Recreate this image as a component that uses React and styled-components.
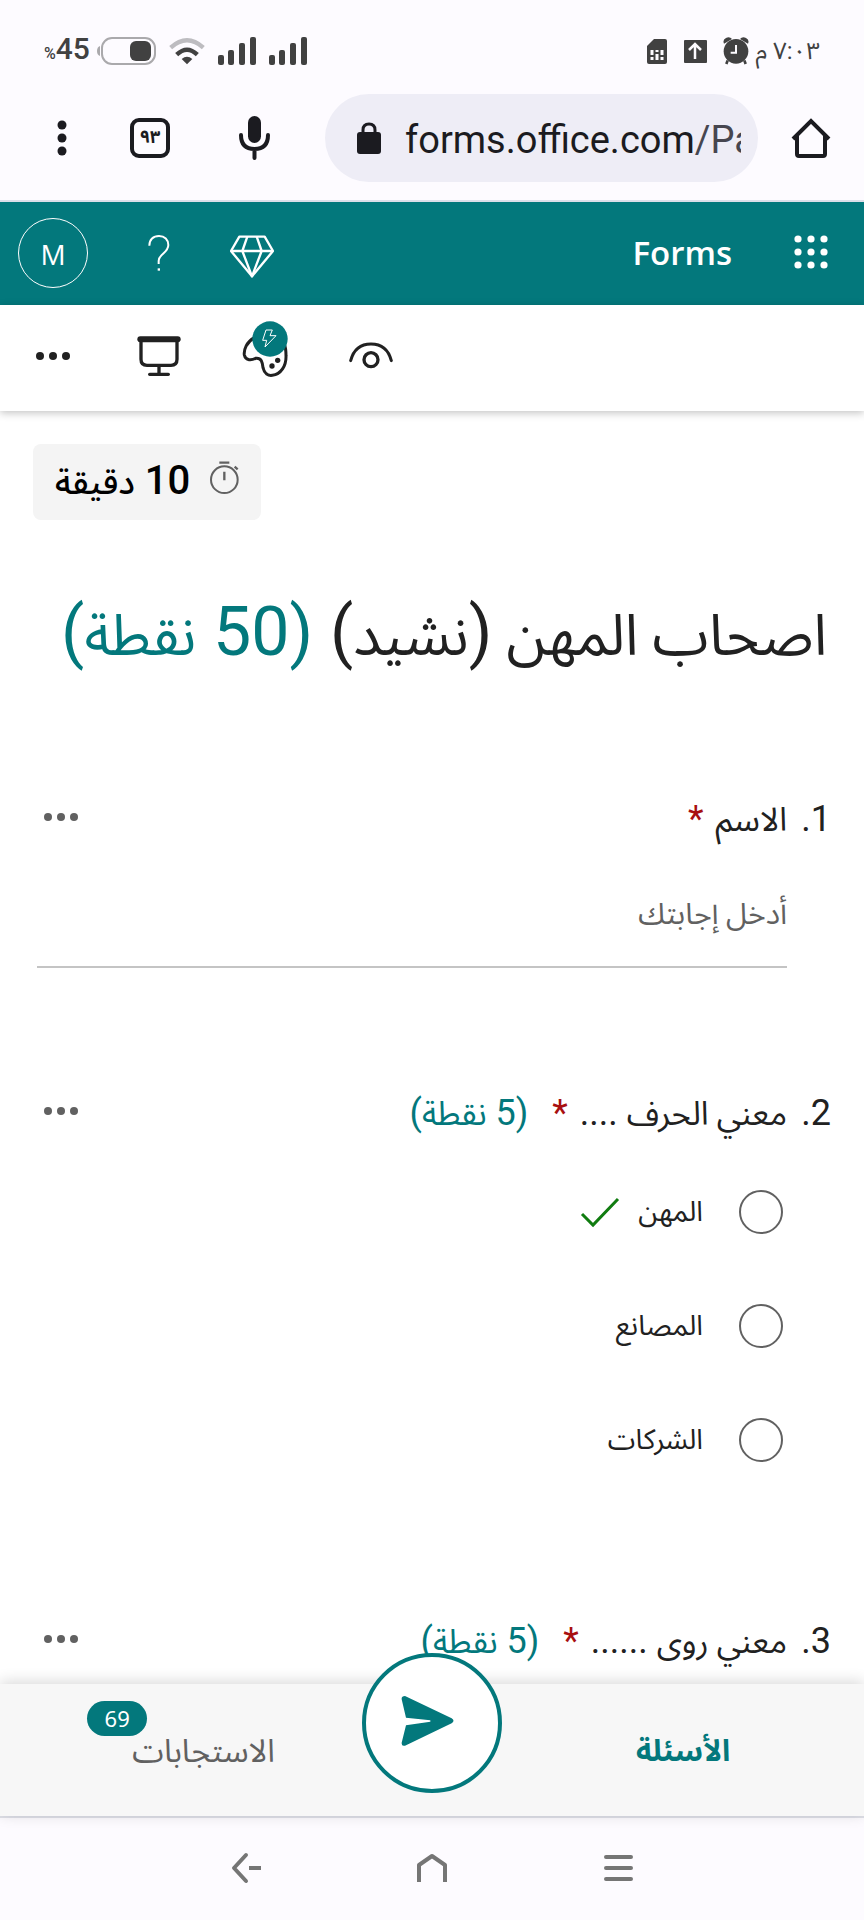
import React, { useState } from 'react';
import styled, { createGlobalStyle, css } from 'styled-components';

const teal = '#03787c';

const GlobalStyle = createGlobalStyle`
  * {
    box-sizing: border-box;
  }

  body {
    margin: 0;
    background: #fff;
    font-family: Roboto, 'Noto Sans Arabic', 'DejaVu Sans', sans-serif;
    color: #212121;
  }

  button,
  input {
    font: inherit;
    color: inherit;
  }
`;

const Screen = styled.div`
  display: flex;
  flex-direction: column;
  height: 100vh;
`;

const StatusBar = styled.div`
  display: flex;
  align-items: center;
  justify-content: space-between;
  height: 94px;
  padding: 8px 44px 0;
  background: #fdfbff;
  color: #414141;
`;

const StatusGroup = styled.div`
  display: flex;
  align-items: center;
  gap: ${props => props.$gap}px;
`;

const Clock = styled.time`
  margin-left: -10px;
  font-size: 24px;
  line-height: 32px;
`;

const Battery = styled.span`
  margin-right: -6px;
  direction: ltr;
  font-size: 30px;
  line-height: 32px;
  font-weight: 500;

  small {
    font-size: 16px;
  }
`;

const BrowserBar = styled.div`
  display: flex;
  align-items: center;
  height: 108px;
  padding: 0 0 18px 8px;
  border-bottom: 2px solid #dcdfe9;
  background: #fdfbff;
  color: #1b1b20;
`;

const IconButton = styled.button`
  display: flex;
  flex: none;
  align-items: center;
  justify-content: center;
  width: ${props => props.$width || 106}px;
  height: 88px;
  padding: 0;
  border: 0;
  background: none;
  cursor: pointer;
`;

const AddressBar = styled.label`
  display: flex;
  flex: 1;
  align-items: center;
  gap: 24px;
  min-width: 0;
  height: 88px;
  padding: 0 17px 0 32px;
  border-radius: 44px;
  background: #eeedf6;
  direction: ltr;
`;

const Url = styled.span`
  flex: 1;
  overflow: hidden;
  padding-top: 4px;
  font-size: 38px;
  line-height: 48px;
  white-space: nowrap;

  span {
    color: #46464f;
  }
`;

const TabsButton = styled(IconButton)`
  span {
    width: 40px;
    height: 40px;
    border: 4px solid #1b1b20;
    border-radius: 9px;
    font-size: 18px;
    font-weight: 700;
    line-height: 30px;
  }
`;

const AppHeader = styled.header`
  display: flex;
  flex: none;
  align-items: center;
  height: 103px;
  padding-bottom: 2px;
  background: ${teal};
  color: #fff;
`;

const Brand = styled.a`
  margin-left: auto;
  margin-right: 26px;
  color: #fff;
  font-family: 'Open Sans', sans-serif;
  font-size: 33px;
  font-weight: 600;
  line-height: 44px;
  text-decoration: none;
`;

const Avatar = styled.span`
  width: 70px;
  height: 70px;
  border: 1px solid #fff;
  border-radius: 50%;
  font-family: 'Open Sans', sans-serif;
  font-size: 28px;
  line-height: 70px;
  text-align: center;
`;

const CommandBar = styled.nav`
  position: relative;
  display: flex;
  flex: none;
  flex-direction: row-reverse;
  justify-content: flex-end;
  height: 106px;
  background: #fff;
  box-shadow: 0 2px 8px rgba(0, 0, 0, 0.24);
  direction: ltr;

  ${IconButton} {
    height: 102px;
  }
`;

const Form = styled.main`
  flex: 1;
  min-height: 0;
  overflow: hidden auto;
  scrollbar-width: none;
  padding: 33px 33px 0;
`;

const Timer = styled.div`
  display: flex;
  align-items: center;
  gap: 20px;
  width: fit-content;
  height: 76px;
  margin-right: auto;
  padding: 0 22px 10px 22px;
  border-radius: 8px;
  background: #f4f4f4;
  color: #000;
  font-size: 40px;
  font-weight: 500;
  line-height: 48px;

  span {
    padding-top: 8px;
  }
`;

const Arabic = styled.span`
  font-size: ${props => props.$size}px;
`;

const Title = styled.h1`
  margin: 68px 4px 113px;
  font-size: 68px;
  font-weight: 400;
  line-height: 88px;
  white-space: nowrap;
`;

const Points = styled.span`
  color: ${teal};
`;

const Question = styled.section`
  height: ${props => props.$height}px;
`;

const QuestionHead = styled.div`
  display: flex;
  align-items: flex-start;
  justify-content: space-between;
  height: 52px;

  ${IconButton} {
    width: 56px;
    height: 48px;
    color: #616161;
  }
`;

const QuestionTitle = styled.h2`
  display: flex;
  align-items: baseline;
  margin: 0;
  font-size: 36px;
  font-weight: 400;
  line-height: 52px;
  white-space: pre;
`;

const Ordinal = styled.span`
  width: 44px;
`;

const Required = styled.span`
  margin: 0 12px 0 ${props => (props.$spaced ? 24 : 0)}px;
  color: #a80f0f;
`;

const Answer = styled.input`
  display: block;
  width: calc(100% - 48px);
  height: 108px;
  margin: 15px 44px 0 4px;
  padding: 0;
  border: 0;
  border-bottom: 2px solid #c4c4c4;
  outline: 0;
  background: none;
  font-size: 30px;

  &::placeholder {
    color: #616161;
    opacity: 1;
  }
`;

const Choices = styled.div`
  display: flex;
  flex-direction: column;
  gap: 70px;
  padding: 51px 48px 0 0;
`;

const Choice = styled.label`
  display: flex;
  align-items: center;
  height: 44px;
  font-size: 28px;
  line-height: 44px;

  svg {
    margin-right: 18px;
  }
`;

const Radio = styled.input`
  width: 44px;
  height: 44px;
  margin: 0 0 0 36px;
  border: 2px solid #616161;
  border-radius: 50%;
  appearance: none;

  &:checked {
    border: 12px solid ${teal};
  }
`;

const Footer = styled.footer`
  position: relative;
  display: grid;
  flex: none;
  grid-template-columns: 1fr 140px 1fr;
  height: 132px;
  background: #f7f7f7;
  box-shadow: 0 -2px 14px rgba(0, 0, 0, 0.16);
`;

const Tab = styled.button`
  display: flex;
  align-items: center;
  justify-content: center;
  padding: 2px 0 0;
  border: 0;
  background: none;
  color: #616161;
  font-size: 32px;
  line-height: 44px;

  ${props => props.$active && css`
    color: ${teal};
    font-size: 30px;
    font-weight: 700;
  `}
`;

const Badge = styled.span`
  align-self: flex-start;
  width: 60px;
  height: 35px;
  margin: 15px -15px 0 0;
  border-radius: 18px;
  background: ${teal};
  color: #fff;
  font-family: 'Noto Sans', sans-serif;
  font-size: 22px;
  line-height: 35px;
`;

const SendButton = styled.button`
  display: flex;
  align-items: center;
  justify-content: center;
  width: 140px;
  height: 140px;
  margin-top: -31px;
  padding: 0 10px 4px 0;
  border: 4px solid ${teal};
  border-radius: 50%;
  background: #fff;
  color: ${teal};
`;

const SystemNav = styled.nav`
  display: flex;
  flex: none;
  justify-content: center;
  height: 104px;
  border-top: 2px solid #dfe0e8;
  background: #fdfbff;
  color: #757575;

  ${IconButton} {
    height: 100px;
  }
`;

const Signal = () => (
  <svg width="38" height="28" viewBox="0 0 38 28" fill="currentColor">
    <rect x="0" y="18" width="6" height="10" rx="2" />
    <rect x="10" y="13" width="6" height="15" rx="2" />
    <rect x="21" y="6" width="6" height="22" rx="2" />
    <rect x="32" y="0" width="6" height="28" rx="2" />
  </svg>
);

const Wifi = () => (
  <svg width="36" height="27" viewBox="0 0 108 81" fill="none" strokeWidth="13">
    <path d="M5 29Q54 -15 103 29" stroke="#bdbcc0" />
    <path d="M23 50Q54 20 85 50" stroke="currentColor" />
    <path d="M38 63Q54 49 70 63L54 79Z" fill="currentColor" />
  </svg>
);

const BatteryIcon = () => (
  <svg width="59" height="28" viewBox="0 0 59 28">
    <path d="M3 9Q0 10 0 14Q0 18 3 19Z" fill="#aaa9ac" />
    <rect x="5" y="1" width="53" height="26" rx="10" fill="none" stroke="#aaa9ac" strokeWidth="2" />
    <rect x="33" y="4" width="21" height="20" rx="6" fill="currentColor" />
  </svg>
);

const Alarm = () => (
  <svg width="26" height="28" viewBox="0 0 78 84" fill="currentColor">
    <path d="M3 20Q-2 8 9 3Q20 -2 27 6ZM75 20Q80 8 69 3Q58 -2 51 6Z" />
    <circle cx="39" cy="43" r="37" />
    <path d="M14 70L10 81M64 70L68 81" stroke="currentColor" strokeWidth="8" />
    <path d="M39 24V47H23" fill="none" stroke="#fdfbff" strokeWidth="6" />
  </svg>
);

const Upload = () => (
  <svg width="24" height="24" viewBox="0 0 24 24">
    <rect x="1" y="1" width="23" height="23" rx="1" fill="currentColor" />
    <path d="M12 20V6M6 11L12 5L18 11" fill="none" stroke="#fdfbff" strokeWidth="2.5" />
  </svg>
);

const Sim = () => (
  <svg width="20" height="25" viewBox="0 0 20 25">
    <path d="M7 0H18Q20 0 20 2V23Q20 25 18 25H2Q0 25 0 23V7Z" fill="currentColor" />
    <path d="M5 11V16M5 18V21M10 11V13M10 15V21M15 11V16M15 18V21" stroke="#fdfbff" strokeWidth="3" />
  </svg>
);

const Home = () => (
  <svg width="40" height="42" viewBox="0 0 40 42" fill="none" stroke="currentColor" strokeWidth="4">
    <path d="M2 22L20 4L38 22" />
    <path d="M6 19V37Q6 39 8 39H32Q34 39 34 37V19" />
  </svg>
);

const Lock = () => (
  <svg width="24" height="32" viewBox="0 0 24 32">
    <path d="M6 12V8Q6 2 12 2Q18 2 18 8V12" fill="none" stroke="currentColor" strokeWidth="3" />
    <rect y="10" width="24" height="22" rx="3" fill="currentColor" />
  </svg>
);

const Mic = () => (
  <svg width="32" height="44" viewBox="0 0 32 44">
    <rect x="9" y="0" width="13" height="27" rx="6.5" fill="currentColor" />
    <path d="M2 19Q2 33 15.500 33Q29 33 29 19M15.500 33V42" fill="none" stroke="currentColor" strokeWidth="4" strokeLinecap="round" />
  </svg>
);

const Kebab = () => (
  <svg width="10" height="36" viewBox="0 0 10 36" fill="currentColor">
    <circle cx="5" cy="5" r="4.500" />
    <circle cx="5" cy="18" r="4.500" />
    <circle cx="5" cy="31" r="4.500" />
  </svg>
);

const Dots = () => (
  <svg width="36" height="10" viewBox="0 0 36 10" fill="currentColor">
    <circle cx="5" cy="5" r="4" />
    <circle cx="18" cy="5" r="4" />
    <circle cx="31" cy="5" r="4" />
  </svg>
);

const Waffle = () => (
  <svg width="34" height="36" viewBox="0 0 34 36" fill="currentColor">
    {[4, 17, 30].map(y => [4, 17, 30].map(x => (
      <circle key={`${x}-${y}`} cx={x} cy={y} r="3.600" />
    )))}
  </svg>
);

const Diamond = () => (
  <svg width="44" height="50" viewBox="0 0 132 150" fill="none" stroke="currentColor" strokeWidth="7" strokeLinejoin="round">
    <path d="M28 26H104L129 69L66 145L3 69Z" />
    <path d="M3 69H129M52 26L37 69L66 145L95 69L80 26" />
  </svg>
);

const Help = () => (
  <svg width="22" height="36" viewBox="0 0 66 108">
    <path d="M4 32C4 14 16 3 33 3C50 3 61 14 61 30C61 54 32 56 32 78V87" fill="none" stroke="currentColor" strokeWidth="6" />
    <rect x="29" y="100" width="7" height="7" fill="currentColor" />
  </svg>
);

const Eye = () => (
  <svg width="44" height="28" viewBox="0 0 132 84" fill="none" stroke="currentColor" strokeWidth="9">
    <path d="M5 56Q18 6 66 6Q114 6 127 56" strokeLinecap="round" />
    <circle cx="66" cy="53" r="21" strokeWidth="10" />
  </svg>
);

const Palette = () => (
  <svg width="48" height="74" viewBox="0 0 144 222">
    <g fill="none" stroke="currentColor" strokeWidth="9">
      <path d="M40 56C16 70 8 92 10 108C14 126 32 124 44 118C62 116 64 130 66 146C70 164 82 171 94 169C120 166 136 140 135 110C135 95 134 85 130 76" />
    </g>
    <circle cx="93" cy="141" r="8" fill="currentColor" />
    <circle cx="110" cy="124" r="8" fill="currentColor" />
    <circle cx="87" cy="60" r="53" fill={teal} />
    <path d="M75 33H94L87 50H105L72 84L77 64H65Z" fill="none" stroke="#fff" strokeWidth="3" />
  </svg>
);

const Present = () => (
  <svg width="44" height="40" viewBox="0 0 132 120" fill="none" stroke="currentColor" strokeLinecap="round">
    <path d="M10 10H122" strokeWidth="18" />
    <path d="M12 14V70Q12 88 30 88H102Q120 88 120 70V14M66 88V114" strokeWidth="10" />
    <path d="M38 115H94" strokeWidth="10" />
  </svg>
);

const Stopwatch = () => (
  <svg width="29" height="33" viewBox="0 0 87 99" fill="none" stroke="#616161" strokeWidth="6">
    <circle cx="43" cy="56" r="40" />
    <path d="M28 5H58M43 32V58M74 17L83 25" strokeWidth="7" />
  </svg>
);

const Check = () => (
  <svg width="40" height="44" viewBox="0 0 40 44" fill="none" stroke="#107c10" strokeWidth="3">
    <path d="M2 24L13 35L38 9" />
  </svg>
);

const Send = () => (
  <svg width="53" height="50" viewBox="0 0 159 150" fill="currentColor">
    <path d="M12 0L152 67Q163 74 152 82L12 149Q1 152 2 140L15 88L88 77V73L15 65L2 10Q1 0 12 0Z" />
  </svg>
);

const Back = () => (
  <svg width="30" height="32" viewBox="0 0 30 32" fill="none" stroke="currentColor" strokeWidth="4" strokeLinecap="round" strokeLinejoin="round">
    <path d="M15 3L3 16L15 29" />
    <path d="M18 16H30" strokeLinecap="butt" />
  </svg>
);

const NavHome = () => (
  <svg width="32" height="32" viewBox="0 0 32 32" fill="none" stroke="currentColor" strokeWidth="4" strokeLinejoin="round">
    <path d="M3 30V13L16 4L29 13V30" />
  </svg>
);

const Recents = () => (
  <svg width="30" height="30" viewBox="0 0 30 30" stroke="currentColor" strokeWidth="4" strokeLinecap="round">
    <path d="M3 4H28M3 15H28M3 26H28" />
  </svg>
);

const choices = [
  { label: 'المهن', correct: true },
  { label: 'المصانع' },
  { label: 'الشركات' },
];

const QuestionHeader = ({ id, number, text, blank, points }) => (
  <QuestionHead>
    <QuestionTitle id={id}>
      <Ordinal>{number}.</Ordinal>
      <Arabic $size={33}>{text}</Arabic>
      {blank && <span> {blank}</span>}
      <Required $spaced={Boolean(points)}>*</Required>
      {points && (
        <Points>
          ({points} <Arabic $size={33}>نقطة</Arabic>)
        </Points>
      )}
    </QuestionTitle>
    <IconButton aria-label="خيارات السؤال"><Dots /></IconButton>
  </QuestionHead>
);

const App = () => {
  const [name, setName] = useState('');
  const [answer, setAnswer] = useState('');

  return (
    <Screen dir="rtl" lang="ar">
      <GlobalStyle />
      <StatusBar>
        <StatusGroup $gap={16}>
          <Clock>٧:٠٣ م</Clock>
          <Alarm />
          <Upload />
          <Sim />
        </StatusGroup>
        <StatusGroup $gap={13}>
          <Signal />
          <Signal />
          <Wifi />
          <BatteryIcon />
          <Battery><small>%</small>45</Battery>
        </StatusGroup>
      </StatusBar>

      <BrowserBar>
        <IconButton aria-label="الصفحة الرئيسية"><Home /></IconButton>
        <AddressBar>
          <Lock />
          <Url>forms.office.com<span>/Pa</span></Url>
        </AddressBar>
        <IconButton $width={140} aria-label="بحث صوتي"><Mic /></IconButton>
        <TabsButton $width={70} aria-label="علامات التبويب"><span>٩٣</span></TabsButton>
        <IconButton $width={107} aria-label="القائمة"><Kebab /></IconButton>
      </BrowserBar>

      <AppHeader>
        <IconButton aria-label="مشغل التطبيقات"><Waffle /></IconButton>
        <Brand href="#forms">Forms</Brand>
        <IconButton $width={80} aria-label="مميز"><Diamond /></IconButton>
        <IconButton aria-label="تعليمات"><Help /></IconButton>
        <IconButton aria-label="الحساب"><Avatar>M</Avatar></IconButton>
      </AppHeader>

      <CommandBar>
        <IconButton aria-label="معاينة"><Eye /></IconButton>
        <IconButton aria-label="نسق"><Palette /></IconButton>
        <IconButton aria-label="تقديم"><Present /></IconButton>
        <IconButton aria-label="المزيد"><Dots /></IconButton>
      </CommandBar>

      <Form>
        <Timer>
          <Stopwatch />
          <span>10 <Arabic $size={34}>دقيقة</Arabic></span>
        </Timer>
        <Title>
          <Arabic $size={57}>اصحاب المهن </Arabic>(<Arabic $size={57}>نشيد</Arabic>){' '}
          <Points>(50 <Arabic $size={57}>نقطة</Arabic>)</Points>
        </Title>

        <Question $height={294}>
          <QuestionHeader id="q1" number={1} text="الاسم" />
          <Answer
            aria-labelledby="q1"
            placeholder="أدخل إجابتك"
            value={name}
            onChange={e => setName(e.target.value)}
          />
        </Question>

        <Question $height={528}>
          <QuestionHeader id="q2" number={2} text="معني الحرف" blank="...." points={5} />
          <Choices role="radiogroup" aria-labelledby="q2">
            {choices.map(({ label, correct }) => (
              <Choice key={label}>
                <Radio
                  type="radio"
                  name="q2"
                  value={label}
                  checked={answer === label}
                  onChange={() => setAnswer(label)}
                />
                {label}
                {correct && <Check />}
              </Choice>
            ))}
          </Choices>
        </Question>

        <Question $height={52}>
          <QuestionHeader id="q3" number={3} text="معني روى" blank="......" points={5} />
        </Question>
      </Form>

      <Footer>
        <Tab $active>الأسئلة</Tab>
        <SendButton aria-label="إرسال"><Send /></SendButton>
        <Tab>
          الاستجابات
          <Badge>69</Badge>
        </Tab>
      </Footer>

      <SystemNav>
        <IconButton $width={186} aria-label="التطبيقات الأخيرة"><Recents /></IconButton>
        <IconButton $width={186} aria-label="الشاشة الرئيسية"><NavHome /></IconButton>
        <IconButton $width={186} aria-label="رجوع"><Back /></IconButton>
      </SystemNav>
    </Screen>
  );
};

export default App;
